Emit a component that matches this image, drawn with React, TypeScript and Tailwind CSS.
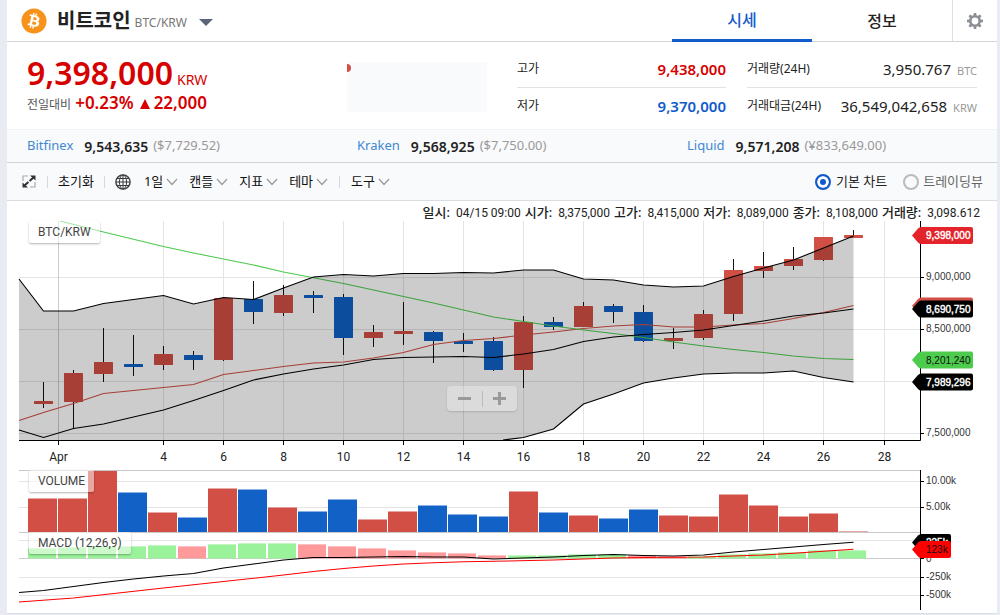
import React from "react";
import { FaBitcoin } from "react-icons/fa";

type Candle = { open: number; close: number; high: number; low: number; up: boolean; vol: number; macd: number; rising: boolean };

const c = (open: number, close: number, high: number, low: number, up: boolean, vol: number, macd: number, rising: boolean): Candle => ({
  open, close, high, low, up, vol, macd, rising,
});

const CANDLES: Candle[] = [
  c(401, 404, 382, 408, true, 498, 548, true),
  c(373, 402, 370, 428, true, 498, 547, true),
  c(362, 374, 328, 382, true, 470, 546, true),
  c(364, 367, 335, 376, false, 492, 546, true),
  c(354, 365, 346, 370, true, 512, 545, true),
  c(355, 360, 351, 370, false, 517, 546, false),
  c(298, 360, 298, 361, true, 488, 544, true),
  c(299, 312, 281, 324, false, 489, 543, true),
  c(295, 313, 285, 316, true, 507, 543, true),
  c(295, 298, 291, 313, false, 511, 544, false),
  c(297, 338, 294, 355, false, 499, 546, false),
  c(332, 338, 325, 347, true, 519, 548, false),
  c(331, 334, 302, 345, true, 511, 550, false),
  c(332, 341, 331, 363, false, 505, 552, false),
  c(341, 344, 333, 352, false, 514, 553, false),
  c(341, 370, 337, 371, false, 516, 555, false),
  c(322, 370, 316, 388, true, 491, 555, true),
  c(322, 327, 317, 330, false, 512, 555, true),
  c(306, 327, 302, 327, true, 515, 554, true),
  c(306, 312, 304, 323, false, 518, 554, true),
  c(312, 341, 305, 342, false, 509, 555, false),
  c(338, 341, 328, 349, true, 515, 556, false),
  c(314, 338, 310, 340, true, 516, 556, true),
  c(270, 314, 259, 321, true, 494, 554, true),
  c(266, 271, 252, 278, true, 505, 553, true),
  c(259, 266, 247, 270, true, 516, 552, true),
  c(237, 260, 237, 261, true, 513, 550, true),
  c(235, 238, 230, 238, true, 531, 550, true),
];

const UPPER =
  "19,279 43.5,311 73.5,311 103.5,303.5 133.5,299.5 163.5,295.5 193.5,304 223.5,297.5 253.5,299.5 283.5,288 313.5,277 343.5,274.5 373.5,276 403.5,273.5 433.5,273.5 463.5,272.5 493.5,273 523.5,270 553.5,270 583.5,279 613.5,280 643.5,285 673.5,287 703.5,286 733.5,276.5 763.5,268 793.5,260 823.5,248 853.5,236";
const LOWER =
  "853.5,382 823.5,377.5 793.5,371 763.5,373 733.5,373 703.5,374 673.5,378 643.5,383 613.5,394 583.5,404 553.5,429 523.5,437.5 503,440";
const MIDDLE =
  "19,430 43.5,437.5 73.5,428.5 103.5,424 133.5,417 163.5,410 193.5,400.5 223.5,390.5 253.5,380 283.5,374 313.5,369 343.5,365 373.5,359.5 403.5,357.5 433.5,357 463.5,356.5 493.5,357.5 523.5,354 553.5,349.5 583.5,341.5 613.5,337 643.5,334.5 673.5,332.5 703.5,330 733.5,325.5 763.5,321 793.5,316 823.5,313 853.5,309";
const SHORT_MA =
  "19,420.5 43.5,412.5 73.5,403.5 103.5,393.5 133.5,390.5 163.5,387.5 193.5,384.5 223.5,374.5 253.5,370.5 283.5,366.5 313.5,363 343.5,362 373.5,358 403.5,352.5 433.5,344.5 463.5,340.5 493.5,338.5 523.5,335 553.5,332 583.5,328.5 613.5,326 643.5,324.5 673.5,327 703.5,327 733.5,325 763.5,323.5 793.5,318.5 823.5,312.5 853.5,305.5";
const LONG_MA =
  "60,221 103.5,232 163.5,246.5 193.5,253 223.5,259 253.5,265 283.5,272 343.5,283.5 373.5,290 433.5,303 493.5,317 523.5,321.5 553.5,326 583.5,330 613.5,333.5 643.5,337.5 673.5,342 703.5,346 733.5,349.5 763.5,352.5 793.5,356 823.5,358.5 853.5,359.5";
const MACD_LINE =
  "19,592.5 43.5,590.5 73.5,586.5 103.5,582.5 133.5,579 163.5,576 193.5,573.5 223.5,568 253.5,564 283.5,560 313.5,557.5 343.5,557.5 403.5,556.5 433.5,557 463.5,557 493.5,559 523.5,558 553.5,557 583.5,555.5 613.5,554.5 643.5,555.5 673.5,556 703.5,555 733.5,552 763.5,549.5 793.5,547 823.5,544.5 853.5,542.2";
const SIGNAL_LINE =
  "19,602 73.5,598 163.5,588 223.5,581.5 283.5,575 313.5,571.5 343.5,568.5 373.5,566 403.5,564 433.5,562.8 463.5,561.8 493.5,561.3 553.5,560 583.5,559 613.5,558 643.5,557.5 673.5,557.3 703.5,557 733.5,556 763.5,555 793.5,553.3 823.5,551.3 853.5,549.3";

const DATES: [number, string][] = [
  [58.5, "Apr"], [163.5, "4"], [223.5, "6"], [283.5, "8"], [343.5, "10"], [403.5, "12"], [463.5, "14"],
  [523.5, "16"], [583.5, "18"], [643.5, "20"], [703.5, "22"], [763.5, "24"], [823.5, "26"], [884.5, "28"],
];

const RED = "#d14f45";
const BLUE = "#1161c6";
const AXIS_TEXT = "font-['Liberation_Sans',sans-serif] text-[10px]";

function Tag({ y, fill, text, color = "#fff", width = 61 }: { y: number; fill: string; text?: string; color?: string; width?: number }) {
  const r = 912 + width;
  return (
    <g>
      <path
        d={`M912 ${y} L918 ${y - 7} Q919.5 ${y - 8.5} 921 ${y - 8.5} H${r - 2} Q${r} ${y - 8.5} ${r} ${y - 6.5} V${y + 6.5} Q${r} ${y + 8.5} ${r - 2} ${y + 8.5} H921 Q919.5 ${y + 8.5} 918 ${y + 7} Z`}
        fill={fill}
      />
      {text && (
        <text x="926" y={y + 3.5} fill={color} stroke={color} strokeWidth={color === "#fff" ? 0.4 : 0} className={AXIS_TEXT}>
          {text}
        </text>
      )}
    </g>
  );
}

function PanelLabel({ children }: { children: React.ReactNode }) {
  return (
    <div className="absolute top-0 left-[22px] rounded-xs bg-white/50 px-[9px] py-[3px] font-['Roboto',sans-serif] text-[12px] leading-4 text-[#444] shadow-[0_1px_2px_rgba(0,0,0,0.3)]">
      {children}
    </div>
  );
}

function PriceChart() {
  return (
    <div className="relative">
      <svg viewBox="7 221 990 249" className="block w-full" role="img" aria-label="BTC/KRW">
        {[277.5, 329.5, 381.5, 433.5].map((y) => (
          <path key={y} d={`M19 ${y}H920`} stroke="#e4e4e4" />
        ))}
        {DATES.map(([x]) => (
          <path key={x} d={`M${x} 221V440`} stroke={x < 60 ? "#ccc" : "#e4e4e4"} />
        ))}
        {CANDLES.map((k, i) => (
          <g key={i}>
            <path d={`M${43.5 + 30 * i} ${k.high}V${k.low}`} stroke="#111" />
            <rect x={34 + 30 * i} y={k.open} width="19" height={k.close - k.open} rx="0.5" fill={k.up ? RED : BLUE} />
          </g>
        ))}
        <g fill="none" strokeWidth="1.1">
          <polyline points={SHORT_MA} stroke={RED} />
          <polyline points={LONG_MA} stroke="#4ccb4c" />
          <polyline points={MIDDLE} stroke="#000" />
          <polyline points={UPPER} stroke="#000" />
          <polyline points={LOWER} stroke="#000" />
        </g>
        <polygon points={`${UPPER} ${LOWER} 19,440`} fill="#000" fillOpacity="0.2" />
        <path d="M19 440.5H920.5V221" fill="none" stroke="#000" />
        {DATES.map(([x, label]) => (
          <g key={x}>
            <path d={`M${x} 440V445`} stroke="#000" />
            <text x={x} y="461" textAnchor="middle" fill="#222" className="font-['Roboto',sans-serif] text-[12px]">
              {label}
            </text>
          </g>
        ))}
        {([[277, "9,000,000"], [329, "8,500,000"], [381, ""], [433, "7,500,000"]] as [number, string][]).map(([y, label]) => (
          <g key={y}>
            <path d={`M921 ${y + 0.5}H924`} stroke="#000" />
            <text x="926" y={y + 3} fill="#333" className={AXIS_TEXT}>{label}</text>
          </g>
        ))}
        <Tag y={235.5} fill="#e3242b" text="9,398,000" />
        <Tag y={306} fill={RED} />
        <Tag y={309} fill="#000" text="8,690,750" />
        <Tag y={360} fill="#4ccb4c" text="8,201,240" color="#111" />
        <Tag y={382} fill="#000" text="7,989,296" />
      </svg>
      <PanelLabel>BTC/KRW</PanelLabel>
      <div className="absolute bottom-[59px] left-[440px] flex h-[25px] w-[70px] items-center rounded bg-white/30 shadow-[0_1px_2px_rgba(0,0,0,0.15)]">
        <button type="button" aria-label="축소" className="flex flex-1 justify-center">
          <svg viewBox="0 0 13 13" className="size-[13px]"><path d="M0 6.5H13" stroke="#999" strokeWidth="3" /></svg>
        </button>
        <span className="h-4 w-px bg-[#bbb]" />
        <button type="button" aria-label="확대" className="flex flex-1 justify-center">
          <svg viewBox="0 0 13 13" className="size-[13px]"><path d="M0 6.5H13M6.5 0V13" stroke="#999" strokeWidth="3" /></svg>
        </button>
      </div>
    </div>
  );
}

function VolumeChart() {
  return (
    <div className="relative">
      <svg viewBox="7 470 990 62" className="block w-full" role="img" aria-label="VOLUME">
        <path d="M19 481.5H920M19 507.5H920" stroke="#e4e4e4" />
        {CANDLES.map((k, i) => {
          const x = 28 + 30 * i + (i >= 15 ? 1 : 0);
          return (
            <g key={i} fill={k.up ? RED : BLUE}>
              <rect x={x} y={k.vol} width="29" height="1" fillOpacity="0.5" />
              <rect x={x} y={k.vol + 1} width="29" height={531 - k.vol} />
            </g>
          );
        })}
        <path d="M19 470.5H920" stroke="#c8c8c8" />
        <path d="M920.5 470V532M921 481.5H924M921 507.5H924" stroke="#000" />
        <text x="926" y="484" fill="#333" className={AXIS_TEXT}>10.00k</text>
        <text x="926" y="510" fill="#333" className={AXIS_TEXT}>5.00k</text>
      </svg>
      <PanelLabel>VOLUME</PanelLabel>
    </div>
  );
}

function MacdChart() {
  return (
    <div className="relative">
      <svg viewBox="7 532 990 81" className="block w-full" role="img" aria-label="MACD">
        <path d="M19 540.5H920M19 577.5H920M19 595.5H920" stroke="#e4e4e4" />
        <path d="M19 558.5H920" stroke="#ccc" />
        {CANDLES.map((k, i) => (
          <g key={i} fill={k.rising ? "#9af29a" : "#ff9a9a"}>
            <rect x={28 + 30 * i} y={k.macd} width="28" height="1" fillOpacity="0.6" />
            <rect x={28 + 30 * i} y={k.macd + 1} width="28" height={557.5 - k.macd} />
          </g>
        ))}
        <path d="M19 532.5H920" stroke="#c8c8c8" />
        <g fill="none" strokeWidth="1.1">
          <polyline points={MACD_LINE} stroke="#000" />
          <polyline points={SIGNAL_LINE} stroke="#f00" />
        </g>
        <path d="M920.5 532V610M921 558.5H924M921 577.5H924M921 595.5H924" stroke="#000" />
        <text x="926" y="562" fill="#333" className={AXIS_TEXT}>0</text>
        <text x="926" y="580" fill="#333" className={AXIS_TEXT}>-250k</text>
        <text x="926" y="598" fill="#333" className={AXIS_TEXT}>-500k</text>
        <Tag y={542.5} fill="#000" text="225k" width={39} />
        <Tag y={549.5} fill="#f00" text="123k" color="#111" width={39} />
      </svg>
      <PanelLabel>MACD (12,26,9)</PanelLabel>
    </div>
  );
}

function GearIcon() {
  return (
    <svg viewBox="-8 -8 16 16" className="size-4" aria-hidden="true">
      <circle r="4.7" fill="none" stroke="#8a8d93" strokeWidth="2.6" />
      {[0, 45, 90, 135, 180, 225, 270, 315].map((a) => (
        <path key={a} d="M-1.5 -5.4L-1.2 -8H1.2L1.5 -5.4Z" fill="#8a8d93" transform={`rotate(${a})`} />
      ))}
    </svg>
  );
}

function ExpandIcon() {
  return (
    <svg viewBox="0 0 14 13" className="h-[13px] w-[14px]" fill="none" aria-hidden="true">
      <path d="M6 1H1V6M8 12H13V7" stroke="#aaa" strokeWidth="1.2" />
      <path d="M2.5 10.5L11.5 2.5" stroke="#333" strokeWidth="2" strokeDasharray="5.2 1.6" />
      <path d="M8 0.5H13.5V5.5ZM0.5 7.5V12.5H6Z" fill="#333" />
    </svg>
  );
}

function GlobeIcon() {
  return (
    <svg viewBox="0 0 16 16" className="size-4" fill="none" stroke="#3c3c3c" aria-hidden="true">
      <circle cx="8" cy="8" r="7.1" strokeWidth="1.4" />
      <ellipse cx="8" cy="8" rx="3.6" ry="7" />
      <path d="M8 1V15M1 8H15M2 4.5H14M2 11.5H14" />
    </svg>
  );
}

function Divider() {
  return <span className="h-3 w-px bg-[#d5d8dc]" />;
}

function Menu({ label }: { label: string }) {
  return (
    <button type="button" aria-haspopup="menu" className="flex items-center gap-[3px] whitespace-nowrap text-[13px] text-[#111]">
      {label}
      <svg viewBox="0 0 12 8" className="h-2 w-3" fill="none" aria-hidden="true">
        <path d="M1 1L6 6.5L11 1" stroke="#999" strokeWidth="1.2" />
      </svg>
    </button>
  );
}

function Stat({ label, value, unit, tone }: { label: string; value: string; unit?: string; tone: string }) {
  return (
    <div className="flex h-9 items-center justify-between">
      <dt className="text-[12px] text-[#222]">{label}</dt>
      <dd className={`text-[15px] whitespace-nowrap ${tone}`}>
        {value}
        {unit && <span className="ml-[6px] text-[11px] text-[#999]">{unit}</span>}
      </dd>
    </div>
  );
}

const EXCHANGES = [
  { name: "Bitfinex", price: "9,543,635", foreign: "($7,729.52)" },
  { name: "Kraken", price: "9,568,925", foreign: "($7,750.00)" },
  { name: "Liquid", price: "9,571,208", foreign: "(¥833,649.00)" },
];

const QUOTE = [
  ["일시:", "04/15 09:00"],
  ["시가:", "8,375,000"],
  ["고가:", "8,415,000"],
  ["저가:", "8,089,000"],
  ["종가:", "8,108,000"],
  ["거래량:", "3,098.612"],
];

export default function App() {
  return (
    <div className="min-h-screen bg-[#e8ebf1] pr-[3px] pl-[7px] font-['Noto_Sans','Noto_Sans_CJK_KR',sans-serif]">
      <main className="border-b border-[#dcdfe6] bg-white">
        <header className="flex h-[42px] border-b border-[#d2d4d8]">
          <div className="flex flex-1 items-center pl-[14px]">
            <FaBitcoin className="size-[26px] text-[#f7931a]" />
            <h1 className="ml-[10px] text-[20px] leading-6 font-bold text-[#222]">비트코인</h1>
            <span className="mt-1 ml-1 text-[12px] text-[#777]">BTC/KRW</span>
            <button type="button" aria-label="마켓 선택" className="mt-1 ml-3">
              <svg viewBox="0 0 14 7" className="h-[7px] w-[14px]"><path d="M0 0H14L7 7Z" fill="#5c6578" /></svg>
            </button>
          </div>
          <nav className="flex text-[16px] font-medium">
            <button type="button" className="-mb-px w-[140px] border-b-3 border-[#115bcb] text-[#115bcb]">시세</button>
            <button type="button" className="w-[140px] text-[#222]">정보</button>
          </nav>
          <button type="button" aria-label="설정" className="flex w-[45px] items-center justify-center border-l border-[#dcdfe4]">
            <GearIcon />
          </button>
        </header>

        <section className="flex h-[87px] px-5">
          <div className="flex flex-1 flex-col pt-[11px] text-[#d60000]">
            <p className="flex h-10 items-baseline leading-10 whitespace-nowrap">
              <strong className="text-[32px] font-semibold">9,398,000</strong>
              <span className="ml-1 text-[14px]">KRW</span>
            </p>
            <p className="flex h-5 items-baseline text-[17px] leading-5 font-semibold whitespace-nowrap">
              <span className="mr-1 text-[12px] font-normal text-[#555]">전일대비</span>
              <span>+0.23%</span>
              <svg viewBox="0 0 10 10" className="mr-1 ml-[6px] size-[10px]" aria-hidden="true">
                <path d="M5 0L10 10H0Z" fill="#d60000" />
              </svg>
              <span>22,000</span>
            </p>
          </div>
          <div className="mt-5 h-[50px] w-[140px] bg-[#f9fafc]">
            <svg viewBox="0 0 140 50" className="block w-full" aria-hidden="true">
              <path d="M0 2A4 4 0 0 1 0 10Z" fill={RED} />
            </svg>
          </div>
          <dl className="ml-[30px] w-[209px] pt-[9px]">
            <Stat label="고가" value="9,438,000" tone="font-semibold text-[#d60000]" />
            <hr className="border-[#e0e2e5]" />
            <Stat label="저가" value="9,370,000" tone="font-semibold text-[#115bcb]" />
          </dl>
          <dl className="ml-[21px] w-[230px] pt-[9px]">
            <Stat label="거래량(24H)" value="3,950.767" unit="BTC" tone="text-[#222]" />
            <hr className="border-[#e0e2e5]" />
            <Stat label="거래대금(24H)" value="36,549,042,658" unit="KRW" tone="text-[#222]" />
          </dl>
        </section>

        <section className="grid h-[34px] grid-cols-3 border-t border-b border-t-[#f0f2f5] border-b-[#d2d4d8] bg-[#f9fafc]">
          {EXCHANGES.map((e) => (
            <p key={e.name} className="flex items-center pl-5 text-[13px] whitespace-nowrap">
              <a href="#" className="text-[#3e88d2]">{e.name}</a>
              <strong className="ml-[11px] text-[14px] font-semibold text-[#222]">{e.price}</strong>
              <span className="ml-[5px] text-[#999]">{e.foreign}</span>
            </p>
          ))}
        </section>

        <section className="flex h-[38px] items-center border-b border-[#dadce0] bg-[#f9fafc] pr-[14px] pl-[15px] text-[13px]">
          <button type="button" aria-label="전체 화면"><ExpandIcon /></button>
          <div className="ml-[11px] flex items-center gap-[10px]">
            <Divider />
            <button type="button" className="text-[#111]">초기화</button>
            <Divider />
            <button type="button" aria-label="시간대"><GlobeIcon /></button>
          </div>
          <div className="ml-[13px] flex items-center gap-[11px]">
            <Menu label="1일" />
            <Menu label="캔들" />
            <Menu label="지표" />
            <Menu label="테마" />
            <Divider />
            <Menu label="도구" />
          </div>
          <div className="ml-auto flex items-center gap-4 whitespace-nowrap">
            <label className="flex items-center gap-[5px] text-[#222]">
              <input type="radio" name="view" defaultChecked className="size-4 appearance-none rounded-full border-2 border-[#bbb] checked:border-[#115bcb] checked:bg-[#115bcb] checked:shadow-[inset_0_0_0_3px_white]" />
              기본 차트
            </label>
            <label className="flex items-center gap-1 text-[#666]">
              <input type="radio" name="view" className="size-4 appearance-none rounded-full border-2 border-[#bbb] checked:border-[#115bcb] checked:bg-[#115bcb] checked:shadow-[inset_0_0_0_3px_white]" />
              트레이딩뷰
            </label>
          </div>
        </section>

        <section>
          <p className="flex h-5 items-center justify-end gap-1 pt-1 pr-[17px] font-['Roboto','Noto_Sans_CJK_KR',sans-serif] text-[12px] whitespace-nowrap text-[#222]">
            {QUOTE.map(([label, value]) => (
              <span key={label} className="flex items-baseline gap-[6px]">
                <span className="text-[13px] font-medium">{label}</span>
                <span>{value}</span>
              </span>
            ))}
          </p>
          <PriceChart />
          <VolumeChart />
          <MacdChart />
        </section>
      </main>
    </div>
  );
}
